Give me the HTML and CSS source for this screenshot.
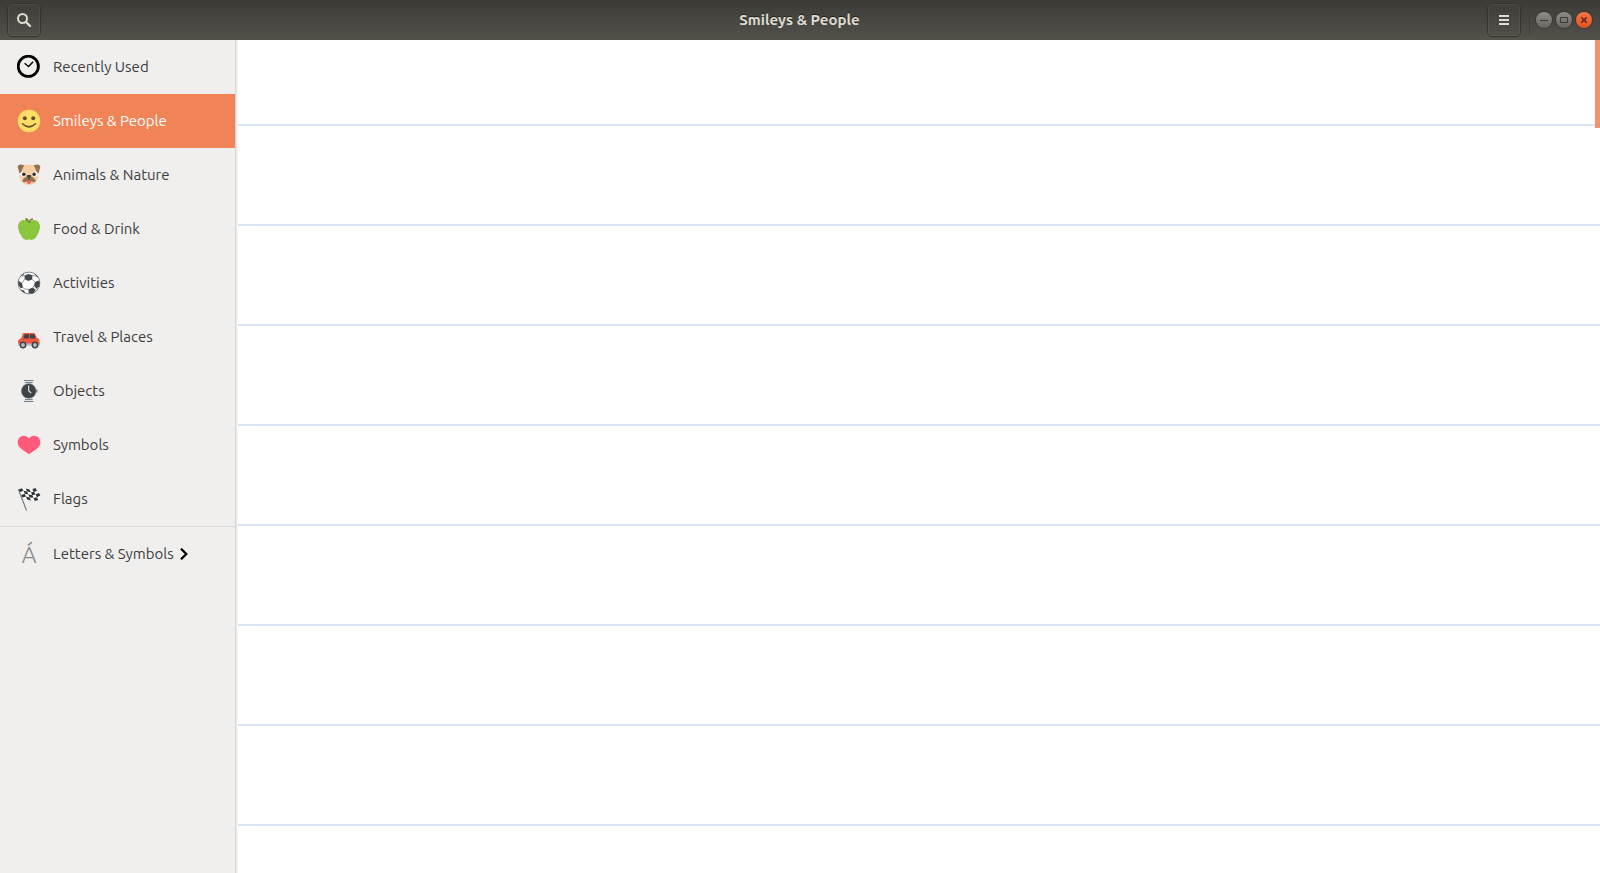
FILE: index.html
```
<!DOCTYPE html>
<html lang="en">
<head>
  <meta charset="UTF-8" />
  <meta name="viewport" content="width=device-width, initial-scale=1.0" />
  <title>Smileys &amp; People</title>
  <link rel="stylesheet" href="styles.css">
</head>
<body>
  <header class="titlebar">
    <div class="titlebar-side">
      <button class="tool-button" type="button" aria-label="Search">
        <svg width="16" height="16" viewBox="0 0 16 16" fill="none" stroke="#dfdbd2">
          <circle cx="6.5" cy="6.5" r="4.5" stroke-width="2" />
          <path d="M10 10l4 4" stroke-width="2.4" stroke-linecap="round" />
        </svg>
      </button>
    </div>
    <h1 class="title">Smileys &amp; People</h1>
    <div class="titlebar-side titlebar-end">
      <button class="tool-button" type="button" aria-label="Menu">
        <svg width="16" height="16" viewBox="0 0 16 16" fill="#dfdbd2">
          <path d="M3 3h10v2H3zM3 7h10v2H3zM3 11h10v2H3z" />
        </svg>
      </button>
      <div class="window-controls">
        <button class="window-button" type="button" aria-label="Minimize">
          <svg width="16" height="16" viewBox="0 0 16 16"><path d="M4 8.500h8" stroke="#3c3b37" /></svg>
        </button>
        <button class="window-button" type="button" aria-label="Maximize">
          <svg width="16" height="16" viewBox="0 0 16 16" fill="none"><path d="M4.500 5.500h7v5h-7z" stroke="#3c3b37" /></svg>
        </button>
        <button class="window-button close" type="button" aria-label="Close">
          <svg width="16" height="16" viewBox="0 0 16 16"><path d="M5.300 5.300l5.400 5.400M10.700 5.300l-5.400 5.400" stroke="#4a2415" stroke-width="1.300" /></svg>
        </button>
      </div>
    </div>
  </header>

  <div class="window">
    <nav class="sidebar">
      <button class="category" type="button">
        <svg class="icon" viewBox="0 0 24 24" fill="none" stroke="#000">
          <circle cx="11.300" cy="11.300" r="10.100" stroke-width="2.800" />
          <path d="M7.600 8.300l4 3.300 4.500-4.800" stroke-width="1.400" />
        </svg>
        Recently Used
      </button>
      <button class="category selected" type="button">
        <svg class="icon" viewBox="0 0 24 24">
          <circle cx="12" cy="12" r="11.300" fill="#ffdd67" />
          <circle cx="7.800" cy="9.200" r="2" fill="#664e27" />
          <circle cx="16.200" cy="9.200" r="2" fill="#664e27" />
          <path d="M5.500 14.800q6.500 6.200 13 0" fill="none" stroke="#664e27" stroke-width="1.500" stroke-linecap="round" />
        </svg>
        Smileys &amp; People
      </button>
      <button class="category" type="button">
        <svg class="icon" viewBox="0 0 24 24">
          <path d="M5 2.500Q12 .8 19 2.500q2.500 5 2.300 12Q19 22 12 22T2.700 14.500Q2.500 7.500 5 2.500z" fill="#f2cfa5" />
          <path d="M7.500 2.500Q3 .8 1.500 2.200T1 5l1.500 5.500q2-.8 2.800-4Q6 4 7.500 2.500zM16.500 2.500q4.500-1.700 6-.3T23 5l-1.500 5.500q-2-.8-2.800-4Q18 4 16.500 2.500z" fill="#947151" />
          <circle cx="6" cy="11.200" r="2.500" fill="#fff" />
          <circle cx="18" cy="11.200" r="2.500" fill="#fff" />
          <circle cx="6.800" cy="11.200" r="1.800" fill="#2b3034" />
          <circle cx="17.200" cy="11.200" r="1.800" fill="#2b3034" />
          <path d="M12 13q2.800 0 4.300 1.700 2.700 1.500 2.200 3.800-1.500 1.500-4.300 0H9.800q-2.800 1.500-4.300 0-.5-2.300 2.200-3.800Q9.200 13 12 13z" fill="#947151" />
          <path d="M10 17.500h4q.3 3.500-2 3.500t-2-3.500z" fill="#f15a61" />
          <path d="M9.700 12.300q2.300-.8 4.600 0 0 2-2.300 2.700-2.300-.7-2.300-2.700z" fill="#3e3a36" />
          <path d="M12 14.500v2.500" stroke="#3e3a36" />
        </svg>
        Animals &amp; Nature
      </button>
      <button class="category" type="button">
        <svg class="icon" viewBox="0 0 24 24">
          <path d="M12 4.800Q15 2.800 17.500 3 23 3.800 23 10.500q-.3 5-4 9.800-3 4.200-7 2-4 2.200-7-2-3.700-4.800-4-9.800Q1 3.800 6.500 3 9 2.800 12 4.800z" fill="#8cc63e" />
          <path d="M8.500 4.200Q12 5.800 15.500 4.200L12.300 6z" fill="#6fa52b" />
          <path d="M12 5.500Q12.500 2.500 16 1.800" fill="none" stroke="#8a5d3b" stroke-width="1.200" />
          <path d="M11.800 4.800Q8 4.500 8.200 1q4 .2 3.600 3.800z" fill="#699635" />
        </svg>
        Food &amp; Drink
      </button>
      <button class="category" type="button">
        <svg class="icon" viewBox="0 0 24 24">
          <circle cx="12" cy="12" r="10.900" fill="#fff" stroke="#61666a" stroke-width=".8" />
          <g fill="#43484c">
            <path d="M7.500 4.500L11.500 3l4 1.300-.3 4.200-4 1.500-3.500-2z" />
            <path d="M18 11l3.500-1.500 1.500 2.500-1 4-3 1.500-2-3z" />
            <path d="M2 10l3 2.200 1 4.600-2.500.2Q.7 13.500 1.300 10z" />
            <path d="M11.500 18.200l4.500-1.700 2.500 2.500-1.700 3q-3 1.200-5.200 0z" />
            <path d="M3 5.800L7 1.900l-.7 2.300zM17 2.200q3 1.500 4.800 5l-2-1.500zM3.500 18.500l3.500.9 1.500 2.800Q5.500 21.500 3.500 18.500z" />
          </g>
          <path d="M5.500 4.800l2-.3M15.500 4.300l4 1.200M7.700 8L5 12.300M15.200 8.500l2.800 2.500M6 16.800l2.500 1.500 3-.1M16 16.500l1-2M18.500 19l2-2" fill="none" stroke="#61666a" stroke-width=".7" />
        </svg>
        Activities
      </button>
      <button class="category" type="button">
        <svg class="icon" viewBox="0 0 24 24">
          <path d="M7 8h9.500q2 0 3.200 5 3.300.8 3.300 3.500v3H1v-2.500q0-3 3.500-4Q5.500 8 7 8z" fill="#ed5844" />
          <path d="M1 18.500h22v2.200H1z" fill="#b6bec2" />
          <path d="M8 9.200h4v4.300H6.500q.5-4.300 1.500-4.300zM13 9.200h4q1.300 1.300 1.600 4.300H13z" fill="#3e4347" />
          <circle cx="22.500" cy="16.500" r="1" fill="#ffce31" />
          <circle cx="6" cy="20" r="3.400" fill="#3e4347" />
          <circle cx="18" cy="20" r="3.400" fill="#3e4347" />
          <circle cx="6" cy="20" r="1.900" fill="#b8bec2" />
          <circle cx="18" cy="20" r="1.900" fill="#b8bec2" />
        </svg>
        Travel &amp; Places
      </button>
      <button class="category" type="button">
        <svg class="icon" viewBox="0 0 24 24">
          <path d="M7.500 1h8.500v22H7.500z" fill="#dce2e5" />
          <path d="M7 1.500h9.500M8 3.500h7.500M8 20.500h7.500M7 22.500h9.500" stroke="#778388" />
          <path d="M19 10.500h1.500v3H19z" fill="#778388" />
          <circle cx="11.700" cy="12" r="7.300" fill="#3e4347" stroke="#6c777c" stroke-width="1" stroke-dasharray="1 1" />
          <path d="M11.700 6.500V12l2.500 2" fill="none" stroke="#e3e8ea" stroke-width="1.100" />
        </svg>
        Objects
      </button>
      <button class="category" type="button">
        <svg class="icon" viewBox="0 0 24 24">
          <path d="M12 5.500C14 2.500 18 2.200 20.500 3.700 23 5.500 24.200 9 22.700 12.200 20.500 16.300 15.500 18.500 12 21.300 8.500 18.500 3.500 16.300 1.300 12.200-.2 9 1 5.500 3.500 3.700 6 2.200 10 2.500 12 5.500z" fill="#ff5a79" />
        </svg>
        Symbols
      </button>
      <button class="category" type="button">
        <svg class="icon" viewBox="0 0 24 24">
          <path d="M1.500 2.500Q5 .5 9 2t9-1l5.500 10q-4 3-8 2T5.500 12z" fill="#fff" />
          <path d="M1.500 2.500l8 21" stroke="#777d80" stroke-width="1.200" />
          <g fill="#2f3437">
            <path d="M1.500 2.500L5 1.300l1.500 2.500L3 5z" />
            <path d="M8.800 1.500l3.700 1L14 5.200l-4-.7z" />
            <path d="M15.500 2L18.500 1l1.500 3-3.500 1z" />
            <path d="M6.500 3.800l3.500.7 1.300 3-3.500-.8z" />
            <path d="M14 5.200l3-.4 1.500 2.700-3.300.7z" />
            <path d="M4.200 8l3.600-1.300L9 9.500l-3.600 1z" />
            <path d="M11.300 7.500l4 .6 1.200 2.700-3.900-.3z" />
            <path d="M18.500 7.300L22 6l1.300 2.500L20 10.200z" />
            <path d="M9 9.600l3.600.9 1.400 3-3.800-1z" />
            <path d="M16.500 10.900l3.500-.7 1.200 2.700-3.400 1z" />
          </g>
        </svg>
        Flags
      </button>
      <hr class="divider" />
      <button class="category" type="button">
        <span class="icon letter" aria-hidden="true">Á</span>
        <span>Letters &amp; Symbols</span>
        <svg class="chevron" viewBox="0 0 8 12" fill="none" stroke="#000" stroke-width="2.200">
          <path d="M1 .7L6.300 6 1 11.300" />
        </svg>
      </button>
    </nav>

    <main class="content">
      <div class="emoji-row"></div>
      <div class="emoji-row"></div>
      <div class="emoji-row"></div>
      <div class="emoji-row"></div>
      <div class="emoji-row"></div>
      <div class="emoji-row"></div>
      <div class="emoji-row"></div>
      <div class="emoji-row"></div>
      <div class="emoji-row"></div>
      <div class="scroll-thumb"></div>
    </main>
  </div>
</body>
</html>
```
FILE: styles.css
```
* {
  box-sizing: border-box;
}

body {
  margin: 0;
  height: 100vh;
  display: flex;
  flex-direction: column;
  overflow: hidden;
  background: #fff;
  color: #3d3d3d;
  font-family: Ubuntu, "Noto Sans", sans-serif;
  font-size: 15px;
}

button {
  margin: 0;
  padding: 0;
  border: 0;
  background: none;
  color: inherit;
  font: inherit;
}

svg {
  display: block;
}

/* Title bar */
.titlebar {
  display: flex;
  align-items: center;
  flex: none;
  height: 40px;
  padding: 0 8px 0 7px;
  background: linear-gradient(#3c3b37, #53514a);
}

.titlebar-side {
  display: flex;
  flex: 1;
}

.titlebar-end {
  justify-content: flex-end;
  align-items: center;
}

.title {
  margin: 0;
  color: #dfdbd2;
  font-size: 15px;
  font-weight: 700;
  line-height: 20px;
  text-shadow: 0 -1px rgba(0, 0, 0, 0.5);
}

.tool-button {
  display: flex;
  align-items: center;
  justify-content: center;
  width: 34px;
  height: 34px;
  border: 1px solid #35342f;
  border-radius: 5px;
  box-shadow: inset 0 0 0 1px rgba(255, 255, 255, 0.06);
}

.window-controls {
  display: flex;
  align-items: center;
  gap: 4px;
  height: 28px;
  margin-left: 8px;
  padding-left: 6px;
  border-left: 1px solid #403f3a;
}

.window-button {
  width: 16px;
  height: 16px;
  border-radius: 50%;
  background: linear-gradient(#8e8d87, #65645e);
  box-shadow: 0 0 0 1px rgba(40, 39, 35, 0.5);
}

.window-button.close {
  background: linear-gradient(#f9764c, #e0501f);
}

.window {
  display: flex;
  flex: 1;
  min-height: 0;
}

/* Category list */
.sidebar {
  flex: none;
  width: 236px;
  border-right: 1px solid #d8d7d5;
  background: #f0efed;
}

.category {
  display: flex;
  align-items: center;
  gap: 12px;
  width: 100%;
  height: 54px;
  padding-left: 17px;
  line-height: 20px;
  text-align: left;
}

.category.selected {
  background: #f18456;
  color: #fff;
}

.icon {
  flex: none;
  width: 24px;
  height: 24px;
}

.letter {
  color: #888;
  font-size: 23px;
  font-weight: 300;
  line-height: 26px;
  text-align: center;
}

.chevron {
  width: 8px;
  height: 12px;
  margin-left: -6px;
}

.divider {
  height: 1px;
  margin: 0;
  border: 0;
  background: #dbdad8;
}

/* Emoji area */
.content {
  position: relative;
  flex: 1;
  padding-left: 2px;
  overflow: hidden;
  box-shadow: inset 2px 0 2px -1px rgba(0, 0, 0, 0.12);
}

.emoji-row {
  height: 100px;
  border-bottom: 2px solid #d9e4f2;
}

.emoji-row:first-child {
  height: 86px;
}

.scroll-thumb {
  position: absolute;
  top: 0;
  right: 0;
  width: 5px;
  height: 88px;
  background: rgba(241, 119, 70, 0.8);
}
```
